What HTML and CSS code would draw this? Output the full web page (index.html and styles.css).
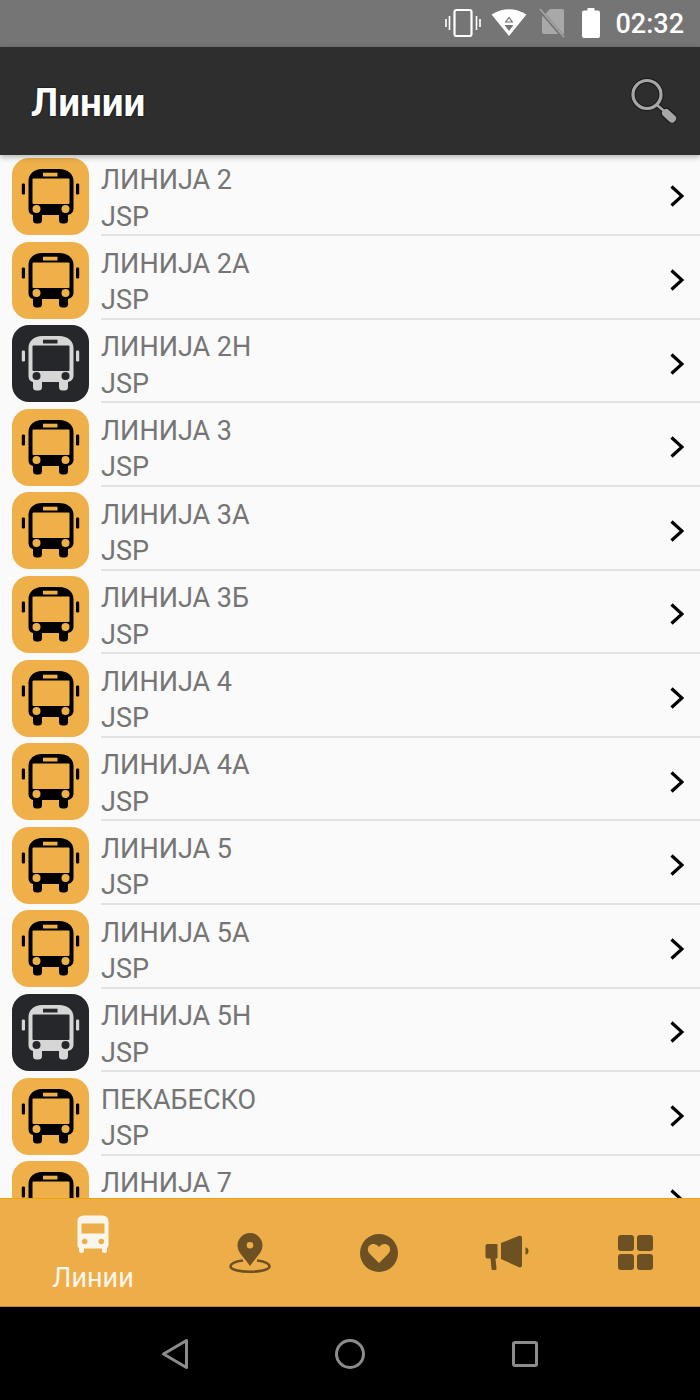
FILE: index.html
```html
<!DOCTYPE html>
<html lang="sr">
<head>
    <meta charset="UTF-8">
    <meta name="viewport" content="width=device-width, initial-scale=1.0">
    <title>Линии</title>
    <link rel="stylesheet" href="styles.css">
</head>
<body>
    <svg class="defs" width="0" height="0">
        <symbol id="bus" viewBox="0 0 77 77">
            <path class="bus-body" d="M30 11h17c9 0 14.500 5 14.500 12v28a6 6 0 0 1-5.500 6v5a3.500 3.500 0 0 1-3.500 3.500h-2a3.500 3.500 0 0 1-3.500-3.500v-5H30v5a3.500 3.500 0 0 1-3.500 3.500h-2a3.500 3.500 0 0 1-3.500-3.500v-5a6 6 0 0 1-4.500-6V23c0-7 5.500-12 13.500-12z"/>
            <rect class="bus-glass" x="20.500" y="20.500" width="37" height="25.500" rx="1"/>
            <rect class="bus-glass" x="31" y="14.700" width="14.500" height="3.800"/>
            <circle class="bus-glass" cx="24.500" cy="51" r="4"/>
            <circle class="bus-glass" cx="53.500" cy="51" r="4"/>
            <rect class="bus-body" x="9.800" y="25.500" width="3.200" height="11" rx="1.200"/>
            <rect class="bus-body" x="64" y="25.500" width="3.200" height="11" rx="1.200"/>
        </symbol>
        <symbol id="chevron" viewBox="0 0 14 22">
            <path d="M1.500 1.500L12 11 1.500 20.500" fill="none" stroke="#000" stroke-width="3.200"/>
        </symbol>
    </svg>

    <div class="status-bar">
        <svg class="st-vibrate" width="36" height="30" viewBox="0 0 36 30">
            <rect x="9.500" y="2" width="17" height="26" rx="2" fill="none" stroke="#fff" stroke-width="2.200"/>
            <path d="M4.500 8v14M1 11v8M31.500 8v14M35 11v8" stroke="#fff" stroke-width="1.600" fill="none"/>
        </svg>
        <svg class="st-wifi" width="36" height="28" viewBox="0 0 36 28">
            <path d="M0.500 5.500Q18 -5 35.500 5.500L18 27z" fill="#fff"/>
            <path d="M13.500 13.500L18 7.500l4.500 6zM13.500 16h9L18 22z" fill="#757575"/>
            <path d="M15.800 12.400L18 9.500l2.200 2.900z" fill="#fff"/>
        </svg>
        <svg class="st-sim" width="26" height="30" viewBox="0 0 26 30">
            <path d="M11 1h12a2 2 0 0 1 2 2v23H5a2 2 0 0 1-2-2V9z" fill="#a8a8a8"/>
            <path d="M1 2l23 27" stroke="#757575" stroke-width="3.500"/>
            <path d="M1 1l24 28" stroke="#a8a8a8" stroke-width="1.500"/>
        </svg>
        <svg class="st-battery" width="18" height="30" viewBox="0 0 18 30">
            <path d="M5.500 0h7v2.500H16a2 2 0 0 1 2 2V28a2 2 0 0 1-2 2H2a2 2 0 0 1-2-2V4.500a2 2 0 0 1 2-2h3.500z" fill="#fff"/>
        </svg>
        <span class="st-time">02:32</span>
    </div>

    <header class="app-bar">
        <h1 class="app-title">Линии</h1>
        <svg class="search-icon" width="46" height="46" viewBox="0 0 46 46">
            <circle cx="17" cy="17.500" r="14" fill="none" stroke="#1c1c1c" stroke-width="5.500"/>
            <path d="M27 28l6.500 5.500" stroke="#1c1c1c" stroke-width="5" fill="none"/>
            <path d="M36 36l6 5.500" stroke="#1c1c1c" stroke-width="11" stroke-linecap="round" fill="none"/>
            <circle cx="17" cy="17.500" r="14" fill="none" stroke="#a6a6a6" stroke-width="3.200"/>
            <path d="M27 28l6.500 5.500" stroke="#a6a6a6" stroke-width="2.500" fill="none"/>
            <path d="M36 36l6 5.500" stroke="#a6a6a6" stroke-width="8" stroke-linecap="round" fill="none"/>
        </svg>
    </header>

    <main class="line-list">
        <div class="row"><svg class="bus-icon"><use href="#bus"/></svg><div class="row-body"><div class="row-text"><span class="row-name">ЛИНИЈА 2</span><span class="row-sub">JSP</span></div><svg class="chevron"><use href="#chevron"/></svg></div></div>
        <div class="row"><svg class="bus-icon"><use href="#bus"/></svg><div class="row-body"><div class="row-text"><span class="row-name">ЛИНИЈА 2А</span><span class="row-sub">JSP</span></div><svg class="chevron"><use href="#chevron"/></svg></div></div>
        <div class="row night"><svg class="bus-icon"><use href="#bus"/></svg><div class="row-body"><div class="row-text"><span class="row-name">ЛИНИЈА 2Н</span><span class="row-sub">JSP</span></div><svg class="chevron"><use href="#chevron"/></svg></div></div>
        <div class="row"><svg class="bus-icon"><use href="#bus"/></svg><div class="row-body"><div class="row-text"><span class="row-name">ЛИНИЈА 3</span><span class="row-sub">JSP</span></div><svg class="chevron"><use href="#chevron"/></svg></div></div>
        <div class="row"><svg class="bus-icon"><use href="#bus"/></svg><div class="row-body"><div class="row-text"><span class="row-name">ЛИНИЈА 3А</span><span class="row-sub">JSP</span></div><svg class="chevron"><use href="#chevron"/></svg></div></div>
        <div class="row"><svg class="bus-icon"><use href="#bus"/></svg><div class="row-body"><div class="row-text"><span class="row-name">ЛИНИЈА 3Б</span><span class="row-sub">JSP</span></div><svg class="chevron"><use href="#chevron"/></svg></div></div>
        <div class="row"><svg class="bus-icon"><use href="#bus"/></svg><div class="row-body"><div class="row-text"><span class="row-name">ЛИНИЈА 4</span><span class="row-sub">JSP</span></div><svg class="chevron"><use href="#chevron"/></svg></div></div>
        <div class="row"><svg class="bus-icon"><use href="#bus"/></svg><div class="row-body"><div class="row-text"><span class="row-name">ЛИНИЈА 4А</span><span class="row-sub">JSP</span></div><svg class="chevron"><use href="#chevron"/></svg></div></div>
        <div class="row"><svg class="bus-icon"><use href="#bus"/></svg><div class="row-body"><div class="row-text"><span class="row-name">ЛИНИЈА 5</span><span class="row-sub">JSP</span></div><svg class="chevron"><use href="#chevron"/></svg></div></div>
        <div class="row"><svg class="bus-icon"><use href="#bus"/></svg><div class="row-body"><div class="row-text"><span class="row-name">ЛИНИЈА 5А</span><span class="row-sub">JSP</span></div><svg class="chevron"><use href="#chevron"/></svg></div></div>
        <div class="row night"><svg class="bus-icon"><use href="#bus"/></svg><div class="row-body"><div class="row-text"><span class="row-name">ЛИНИЈА 5Н</span><span class="row-sub">JSP</span></div><svg class="chevron"><use href="#chevron"/></svg></div></div>
        <div class="row"><svg class="bus-icon"><use href="#bus"/></svg><div class="row-body"><div class="row-text"><span class="row-name">ПЕКАБЕСКО</span><span class="row-sub">JSP</span></div><svg class="chevron"><use href="#chevron"/></svg></div></div>
        <div class="row"><svg class="bus-icon"><use href="#bus"/></svg><div class="row-body"><div class="row-text"><span class="row-name">ЛИНИЈА 7</span><span class="row-sub"></span></div><svg class="chevron"><use href="#chevron"/></svg></div></div>
    </main>

    <nav class="tab-bar">
        <div class="tab tab-active">
            <svg width="34" height="38" viewBox="0 0 34 38">
                <path fill-rule="evenodd" fill="#fbf6ec" d="M9 .5h16c5 0 7.500 2 7.500 6V30c0 1.500-.7 2.500-1.500 3v2.500a2.500 2.500 0 0 1-5 0V33.500H8v2a2.500 2.500 0 0 1-5 0V33c-.8-.5-1.500-1.500-1.500-3V6.500c0-4 2.500-6 7.500-6zM5.500 8.500v10h23v-10zM8.700 23.700a2.800 2.800 0 1 0 0 5.600 2.800 2.800 0 0 0 0-5.600zm16.600 0a2.800 2.800 0 1 0 0 5.600 2.800 2.800 0 0 0 0-5.600z"/>
            </svg>
            <span class="tab-label">Линии</span>
        </div>
        <div class="tab">
            <svg width="42" height="42" viewBox="0 0 42 42">
                <path fill="#6e5122" fill-rule="evenodd" d="M21 1a12.500 12.500 0 0 1 12.500 12.500C33.500 21 26 26 21 34 16 26 8.500 21 8.500 13.500A12.500 12.500 0 0 1 21 1zm0 9a3.300 3.300 0 1 0 0 6.600 3.300 3.300 0 0 0 0-6.600z"/>
                <path fill="none" stroke="#6e5122" stroke-width="2.600" d="M14 28.500C6 29.500 1.500 31.500 1.500 34.500c0 3 8.500 5.200 19.500 5.200s19.500-2.200 19.500-5.200c0-3-4.500-5-12.500-6"/>
            </svg>
        </div>
        <div class="tab">
            <svg width="38" height="38" viewBox="0 0 38 38">
                <path fill="#6e5122" fill-rule="evenodd" d="M19 0a19 19 0 1 1 0 38 19 19 0 0 1 0-38zm0 29l-9-9c-3-3-2.500-6.500-.5-8.500 2.500-2.500 7-2 9.500 1.500 2.500-3.500 7-4 9.500-1.500 2 2 2.500 5.500-.5 8.500z"/>
            </svg>
        </div>
        <div class="tab">
            <svg width="46" height="36" viewBox="0 0 46 36">
                <path fill="#6e5122" d="M3.500 9h9a1 1 0 0 1 1 1v12.500a1 1 0 0 1-1 1h-1l1 10c.1 1-.5 1.500-1.500 1.500H9c-1 0-1.300-.5-1.500-1.500L6.500 23.500h-3a2 2 0 0 1-2-2V11a2 2 0 0 1 2-2z"/>
                <path fill="#6e5122" d="M17 8l17.500-7c2-.9 3.500 0 3.500 2v27c0 2-1.500 3-3.500 2L17 24z"/>
                <path fill="#6e5122" d="M41.500 12.500c2 0 3 1.700 3 3.500s-1 3.500-3 3.500z"/>
            </svg>
        </div>
        <div class="tab">
            <div class="grid-icon">
                <span></span><span></span><span></span><span></span>
            </div>
        </div>
    </nav>

    <div class="system-nav">
        <svg width="28" height="32" viewBox="0 0 28 32">
            <path d="M25.500 2.500v27L2.500 16z" fill="none" stroke="#8c8c8c" stroke-width="3" stroke-linejoin="round"/>
        </svg>
        <svg width="32" height="32" viewBox="0 0 32 32">
            <circle cx="16" cy="16" r="13.500" fill="none" stroke="#8c8c8c" stroke-width="3"/>
        </svg>
        <svg width="28" height="28" viewBox="0 0 28 28">
            <rect x="2.500" y="2.500" width="23" height="23" rx="1.500" fill="none" stroke="#8c8c8c" stroke-width="3"/>
        </svg>
    </div>
</body>
</html>
```

FILE: styles.css
```css
* {
    box-sizing: border-box;
}
body {
    margin: 0;
    height: 1400px;
    overflow: hidden;
    display: flex;
    flex-direction: column;
    font-family: Roboto, sans-serif;
    background-color: #fafafa;
}
.defs {
    position: absolute;
}
.status-bar {
    height: 47px;
    flex: none;
    background-color: #757575;
    display: flex;
    align-items: center;
    padding-right: 16px;
}
.st-vibrate {
    margin-left: auto;
    margin-top: -1px;
}
.st-wifi {
    margin-left: 10px;
    margin-top: -2px;
}
.st-sim {
    margin-left: 12px;
    margin-top: -1px;
}
.st-battery {
    margin-left: 17px;
    margin-top: -1px;
}
.st-time {
    margin-left: 15px;
    color: #fff;
    font-size: 27px;
    font-weight: 500;
}
.app-bar {
    height: 108px;
    flex: none;
    background-color: #2e2e2e;
    display: flex;
    align-items: center;
    justify-content: space-between;
    padding: 0 24px 0 31px;
    position: relative;
    z-index: 2;
    box-shadow: 0 2px 6px rgba(0, 0, 0, 0.3);
}
.app-title {
    margin: 3px 0 0;
    color: #fff;
    font-size: 38.5px;
    font-weight: 700;
    text-shadow: 0 0 2px #000;
}
.search-icon {
    margin-top: -2px;
}
.line-list {
    flex: 1;
    overflow: hidden;
    min-height: 0;
}
.row {
    display: flex;
    height: 83.6px;
}
.row:first-child {
    margin-top: -2.4px;
}
.bus-icon {
    width: 77px;
    height: 77px;
    flex: none;
    margin: 5.4px 12px 0;
    border-radius: 17px;
    background-color: #efb04a;
    --bus-body: #000;
    --bus-glass: #efb04a;
}
.night .bus-icon {
    background-color: #25272a;
    --bus-body: #d6d6d6;
    --bus-glass: #25272a;
}
.bus-body {
    fill: var(--bus-body);
}
.bus-glass {
    fill: var(--bus-glass);
}
.row-body {
    flex: 1;
    display: flex;
    align-items: center;
    justify-content: space-between;
    border-bottom: 2px solid #e2e2e2;
    padding-right: 16px;
}
.row-text {
    display: flex;
    flex-direction: column;
    gap: 6.5px;
    color: #757575;
    font-size: 27px;
    line-height: 30px;
    margin-top: 10px;
}
.row-sub {
    min-height: 30px;
}
.chevron {
    width: 14px;
    height: 22px;
    margin-top: 6px;
}
.tab-bar {
    height: 109px;
    flex: none;
    background-color: #edae49;
    border-top: 1px solid #eba400;
    border-bottom: 1px solid #b98a30;
    display: grid;
    grid-template-columns: 186px repeat(4, 1fr);
    position: relative;
    z-index: 2;
}
.tab {
    display: flex;
    flex-direction: column;
    align-items: center;
    justify-content: center;
}
.tab-active {
    padding-top: 3px;
}
.tab-label {
    color: #fbf6ec;
    font-size: 27px;
    line-height: 30px;
    margin-top: 10px;
}
.grid-icon {
    display: grid;
    grid-template-columns: 16px 16px;
    gap: 3px;
}
.grid-icon span {
    height: 16px;
    background-color: #6e5122;
    border-radius: 3px;
}
.system-nav {
    height: 93px;
    flex: none;
    background-color: #000;
    padding: 0 161px;
    display: flex;
    align-items: center;
    justify-content: space-between;
}
```
